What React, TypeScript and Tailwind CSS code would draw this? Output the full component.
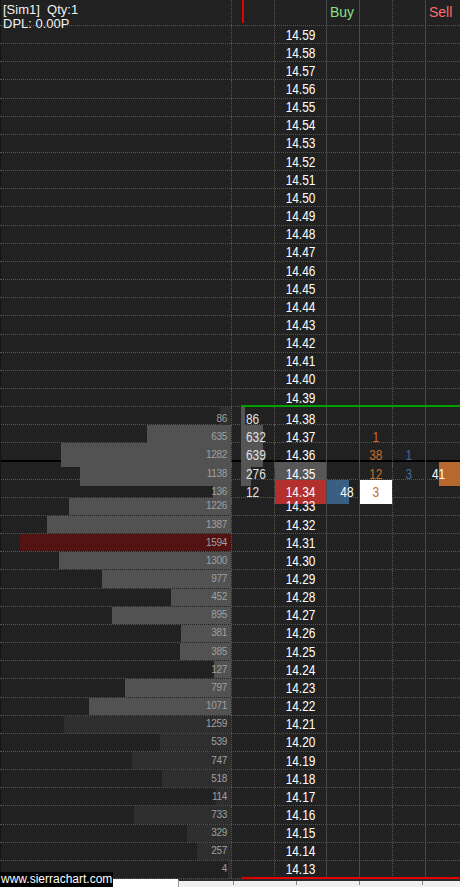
import React from "react";

const COLS = "grid grid-cols-[231px_10px_33px_52px_33px_33px_33px_35px]";
const DOT_L = "border-l border-dotted border-[#555555]";
const SOLID_L = "border-l border-solid border-[#4a4a4a]";
const EDGE_L = "border-l border-solid border-[#141414]";

const PRICES: string[] = Array.from({ length: 47 }, (_, i) => ((1459 - i) / 100).toFixed(2));

type Tone = "l" | "d" | "r";
const A: Record<string, [number, Tone]> = {
  "14.38": [86, "d"],
  "14.37": [635, "l"],
  "14.36": [1282, "l"],
  "14.35": [1138, "l"],
  "14.34": [136, "l"],
  "14.33": [1226, "l"],
  "14.32": [1387, "l"],
  "14.31": [1594, "r"],
  "14.30": [1300, "l"],
  "14.29": [977, "l"],
  "14.28": [452, "l"],
  "14.27": [895, "l"],
  "14.26": [381, "l"],
  "14.25": [385, "l"],
  "14.24": [127, "l"],
  "14.23": [797, "l"],
  "14.22": [1071, "l"],
  "14.21": [1259, "d"],
  "14.20": [539, "d"],
  "14.19": [747, "d"],
  "14.18": [518, "d"],
  "14.17": [114, "d"],
  "14.16": [733, "d"],
  "14.15": [329, "d"],
  "14.14": [257, "d"],
  "14.13": [4, "d"],
};

const TONE: Record<Tone, string> = {
  l: "bg-[#525252]",
  d: "bg-[#2e2e2e]",
  r: "bg-[#531313]",
};

const C: Record<string, [number, number]> = {
  "14.38": [86, 4],
  "14.37": [632, 22],
  "14.36": [639, 22],
  "14.35": [276, 10],
  "14.34": [12, 0],
};

const F: Record<string, number> = { "14.37": 1, "14.36": 38, "14.35": 12, "14.34": 3 };
const G: Record<string, number> = { "14.36": 1, "14.35": 3 };

function Num({ children, origin }: { children: React.ReactNode; origin: string }) {
  return (
    <span className={`relative inline-block scale-x-85 text-[14px] leading-none ${origin}`}>{children}</span>
  );
}

function Row({ p }: { p: string }) {
  const a = A[p];
  const c = C[p];
  const f = F[p];
  const g = G[p];
  const rowBorder =
    p === "14.36"
      ? "border-b-2 border-solid border-black"
      : "border-b border-dotted border-[#555555]";
  const priceBg = p === "14.35" ? "bg-[#575757]" : p === "14.34" ? "bg-[#b3302f]" : "";
  return (
    <div className={`relative ${COLS} ${rowBorder}`}>
      {/* A: volume histogram */}
      <div className={`relative flex justify-end ${EDGE_L}`}>
        {a && (
          <div
            className={`h-full ${TONE[a[1]]}`}
            style={{ width: Math.max(3, Math.round(a[0] * 0.1325)) }}
          />
        )}
        {a && (
          <span className="absolute inset-0 flex items-center justify-end pr-[4px] text-[10px] leading-none tracking-[-0.3px] text-[#a0a0a0]">
            {a[0]}
          </span>
        )}
      </div>
      {/* B */}
      <div className={DOT_L} />
      {/* C: recent volume */}
      <div className="relative flex items-center">
        {c && c[1] > 0 && <div className="absolute bottom-0 left-0 top-0 bg-[#555555]" style={{ width: c[1] }} />}
        {c && (
          <span className="relative pl-[5px] text-[#e2e2e2]">
            <Num origin="origin-left">{c[0]}</Num>
          </span>
        )}
      </div>
      {/* D: price */}
      <div className={`flex items-center justify-center bg-clip-padding ${DOT_L} ${priceBg}`}>
        <Num origin="origin-center">
          <span className="text-white">{p}</span>
        </Num>
      </div>
      {/* E: bid */}
      <div className={`relative flex items-center justify-end pr-[5px] ${SOLID_L}`}>
        {p === "14.34" && (
          <>
            <div className="absolute bottom-0 left-0 top-0 w-[22px] bg-[#3a5f82]" />
            <span className="relative text-white">
              <Num origin="origin-right">48</Num>
            </span>
          </>
        )}
      </div>
      {/* F: buy orders */}
      <div
        className={`flex items-center justify-center bg-clip-padding ${SOLID_L} ${
          p === "14.34" ? "bg-white" : ""
        }`}
      >
        {f !== undefined && (
          <span className="text-[#c86c2c]">
            <Num origin="origin-center">{f}</Num>
          </span>
        )}
      </div>
      {/* G */}
      <div className={`flex items-center justify-center ${DOT_L}`}>
        {g !== undefined && (
          <span className="text-[#46698f]">
            <Num origin="origin-center">{g}</Num>
          </span>
        )}
      </div>
      {/* H: sell */}
      <div className={`relative flex items-center pl-[6px] ${SOLID_L}`}>
        {p === "14.35" && (
          <>
            <div className="absolute bottom-0 right-0 top-0 w-[21px] bg-[#b8682e]" />
            <span className="relative text-white">
              <Num origin="origin-left">41</Num>
            </span>
          </>
        )}
      </div>
      {p === "14.38" && (
        <div className="absolute left-[241px] right-0 top-[-2px] z-10 h-[2px] bg-[#00a000]" />
      )}
      {p === "14.13" && (
        <div className="absolute bottom-[-1px] left-[241px] right-0 z-10 h-[2px] bg-[#e00000]" />
      )}
    </div>
  );
}

function Header() {
  return (
    <div className={`h-[26px] ${COLS} border-b border-dotted border-[#555555]`}>
      <div className={EDGE_L} />
      <div className={DOT_L} />
      <div className="flex items-start">
        <div className="ml-[1px] h-[23px] w-[2px] bg-[#e00000]" />
      </div>
      <div className={DOT_L} />
      <div className={`flex items-center pl-[3px] text-[14px] text-[#86e086] ${SOLID_L}`}>Buy</div>
      <div className={SOLID_L} />
      <div className={DOT_L} />
      <div className={`flex items-center pl-[3px] text-[14px] text-[#ff6b6b] ${SOLID_L}`}>Sell</div>
    </div>
  );
}

function BottomStrip() {
  return (
    <div className="flex h-[8px]">
      <div className="w-[178px] bg-white" />
      <div className="flex flex-1 items-start gap-[62px] border-l border-t-2 border-l-[#9a9a9a] border-t-[#2c2c2c] bg-[#f0f0f0] pl-[54px]">
        <div className="h-[4px] w-[1px] bg-[#8a8a8a]" />
        <div className="h-[4px] w-[1px] bg-[#8a8a8a]" />
        <div className="h-[4px] w-[1px] bg-[#8a8a8a]" />
        <div className="h-[4px] w-[1px] bg-[#8a8a8a]" />
      </div>
    </div>
  );
}

export default function App() {
  return (
    <div className="relative h-[887px] w-[460px] overflow-hidden bg-[#212121] font-['Liberation_Sans',Arial,sans-serif] text-white">
      <Header />
      <div className="grid h-[853px] grid-rows-[repeat(47,minmax(0,1fr))]">
        {PRICES.map((p) => (
          <Row key={p} p={p} />
        ))}
      </div>
      <BottomStrip />
      <div className="absolute left-[3px] top-[3px] whitespace-pre text-[13px] leading-[14px] text-[#f2f2f2]">
        <div>[Sim1]  Qty:1</div>
        <div>DPL: 0.00P</div>
      </div>
      <div className="absolute bottom-0 left-0 z-20 h-[15px] bg-black px-[1px] text-[12px] leading-[15px] text-white">
        www.sierrachart.com
      </div>
    </div>
  );
}
